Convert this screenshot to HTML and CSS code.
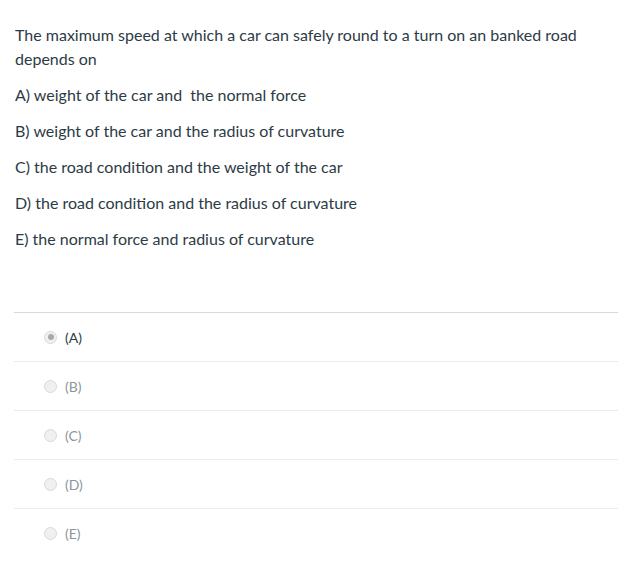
FILE: index.html
```html
<!DOCTYPE html>
<html>
<head>
<meta charset="utf-8">
<link rel="stylesheet" href="styles.css">
</head>
<body>
<div class="question">
  <div class="text">
    <p>The maximum speed at which a car can safely round to a turn on an banked road depends on</p>
    <p>A) weight of the car and &nbsp;the normal force</p>
    <p>B) weight of the car and the radius of curvature</p>
    <p>C) the road condition and the weight of the car</p>
    <p>D) the road condition and the radius of curvature</p>
    <p>E) the normal force and radius of curvature</p>
  </div>
  <div class="answers">
    <div class="answer first"><span class="radio checked"></span><span class="label selected">(A)</span></div>
    <div class="answer"><span class="radio"></span><span class="label">(B)</span></div>
    <div class="answer"><span class="radio"></span><span class="label">(C)</span></div>
    <div class="answer"><span class="radio"></span><span class="label">(D)</span></div>
    <div class="answer last"><span class="radio"></span><span class="label">(E)</span></div>
  </div>
</div>
</body>
</html>
```
FILE: styles.css
```css
html, body {
  margin: 0;
  padding: 0;
  background: #fff;
}
body {
  font-family: Lato, "Open Sans", sans-serif;
  color: #2d3b45;
}
.question {
  padding: 23px 19px 0 15px;
}
.text p {
  margin: 0 0 12px 0;
  font-size: 16px;
  line-height: 24px;
}
.answers {
  margin-top: 61px;
  margin-left: -1px;
}
.answer {
  display: flex;
  align-items: center;
  height: 48px;
  border-top: 1px solid #ebebeb;
  padding-left: 30px;
}
.answer.first {
  border-top-color: #dadada;
}
.radio {
  width: 11px;
  height: 11px;
  border-radius: 50%;
  border: 1px solid #d9d9d9;
  background: #f0f0f0;
  position: relative;
  margin-right: 8px;
}
.radio.checked::after {
  content: "";
  position: absolute;
  left: 2.5px;
  top: 2.5px;
  width: 6px;
  height: 6px;
  border-radius: 50%;
  background: #a9a9a9;
}
.label {
  font-size: 14px;
  color: #8b969e;
}
.label.selected {
  color: #2d3b45;
}
```
